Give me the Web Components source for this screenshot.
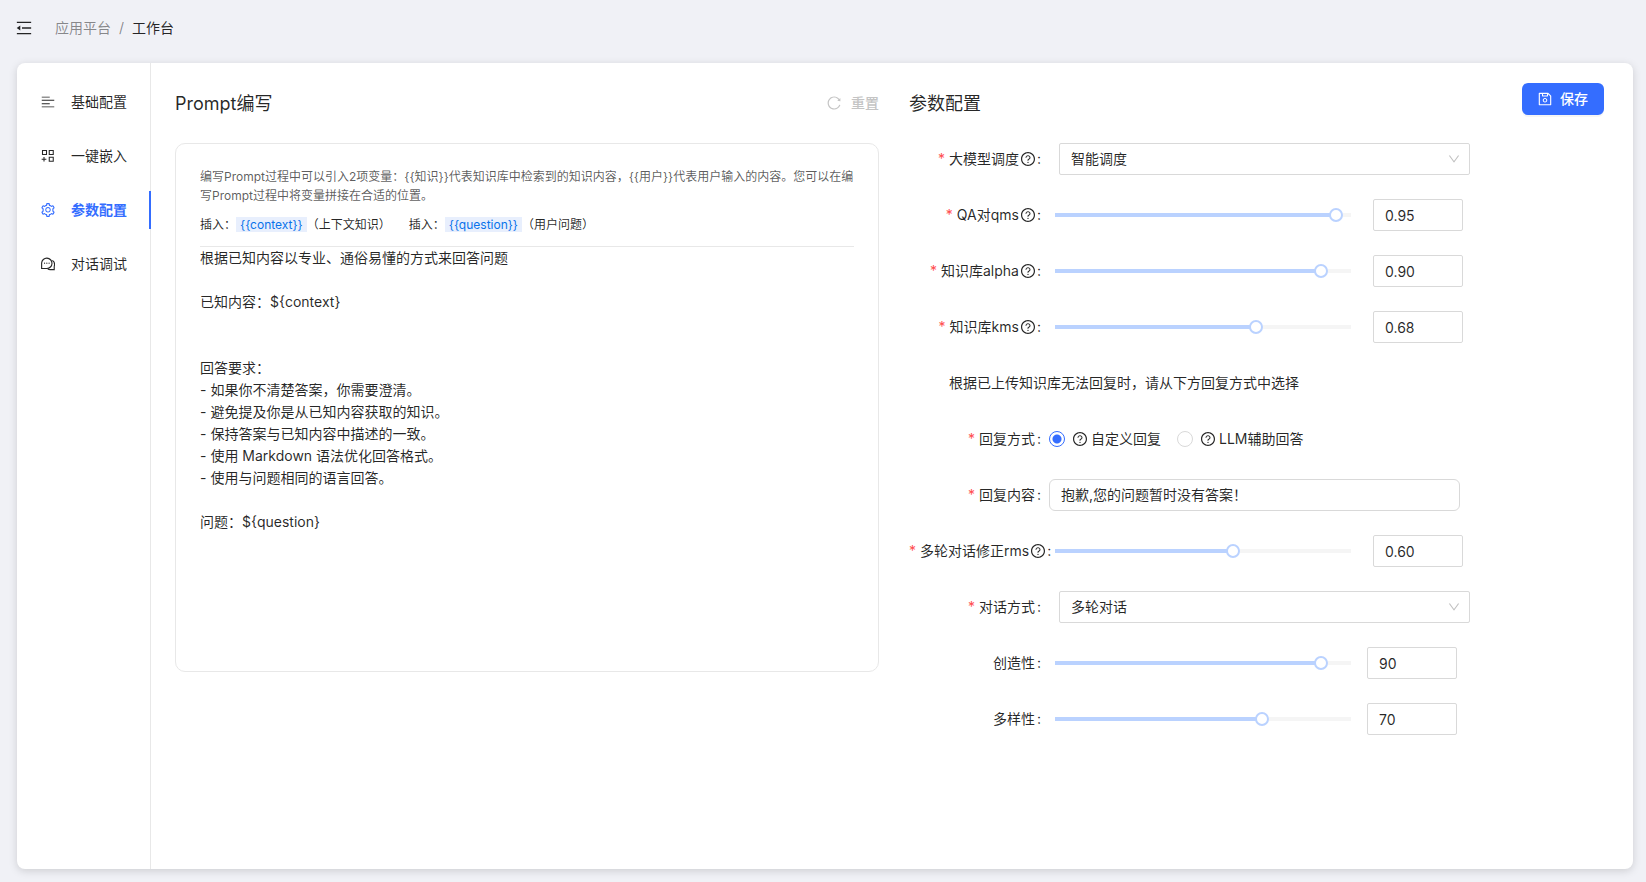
<!DOCTYPE html>
<html lang="zh-CN">
<head>
<meta charset="utf-8">
<meta name="viewport" content="width=device-width, initial-scale=1">
<title>工作台 - 应用平台</title>
<style>
  html {
    --primary: #346dff;
    --text: rgba(0, 0, 0, .85);
    --muted: rgba(0, 0, 0, .45);
    --line: #d9d9d9;
    --soft-line: #e8e8e8;
    --fill: #bad2ff;
    --rail: #f5f5f5;
    font: 14px/22px Inter, "Noto Sans CJK SC", sans-serif;
    color: var(--text);
    background: #f0f1f6;
  }
  body { margin: 0; }
</style>
</head>
<body>
<app-shell>
  <app-header slot="header"></app-header>
  <side-nav slot="nav">
    <nav-item icon="align">基础配置</nav-item>
    <nav-item icon="embed">一键嵌入</nav-item>
    <nav-item icon="setting" active>参数配置</nav-item>
    <nav-item icon="comment">对话调试</nav-item>
  </side-nav>
  <content-panel heading="Prompt编写">
    <reset-button slot="action">重置</reset-button>
    <prompt-editor></prompt-editor>
  </content-panel>
  <content-panel heading="参数配置">
    <save-button slot="action">保存</save-button>
    <select-row label="大模型调度" help required options="智能调度"></select-row>
    <slider-row label="QA对qms" help required value="0.95" max="1"></slider-row>
    <slider-row label="知识库alpha" help required value="0.90" max="1"></slider-row>
    <slider-row label="知识库kms" help required value="0.68" max="1"></slider-row>
    <note-row>根据已上传知识库无法回复时，请从下方回复方式中选择</note-row>
    <radio-row label="回复方式" required options="自定义回复|LLM辅助回答"></radio-row>
    <text-row label="回复内容" required value="抱歉,您的问题暂时没有答案！"></text-row>
    <slider-row label="多轮对话修正rms" help required value="0.60" max="1"></slider-row>
    <select-row label="对话方式" required options="多轮对话|单轮对话"></select-row>
    <slider-row label="创造性" value="90" max="100"></slider-row>
    <slider-row label="多样性" value="70" max="100"></slider-row>
  </content-panel>
</app-shell>

<script>
const ICONS = {
  fold: '<path d="M112 156h800v72H112zM400 476h512v72H400zM112 796h800v72H112zM104 512 304 366v292z"/>',
  align: '<path d="M112 174h512v56H112zM112 370h800v56H112zM112 598h512v56H112zM112 794h800v56H112z"/>',
  embed: '<path fill="none" stroke="currentColor" stroke-width="68" d="M160 160h256v256H160zM592 160h256v256H592zM592 592h256v256H592zM256 576v288M104 720h304"/>',
  setting: '<path d="M924.8 625.7l-65.5-56c3.1-19 4.7-38.4 4.7-57.8s-1.6-38.8-4.7-57.8l65.5-56a32.03 32.03 0 009.3-35.2l-.9-2.6a443.74 443.74 0 00-79.7-137.9l-1.8-2.1a32.12 32.12 0 00-35.1-9.5l-81.3 28.9c-30-24.6-63.5-44-99.7-57.6l-15.7-85a32.05 32.05 0 00-25.8-25.7l-2.7-.5c-52.1-9.4-106.9-9.4-159 0l-2.7.5a32.05 32.05 0 00-25.8 25.7l-15.8 85.4a351.86 351.86 0 00-99 57.4l-81.9-29.1a32 32 0 00-35.1 9.5l-1.8 2.1a446.02 446.02 0 00-79.7 137.9l-.9 2.6c-4.5 12.5-.8 26.5 9.3 35.2l66.3 56.6c-3.1 18.8-4.6 38-4.6 57.1 0 19.2 1.5 38.4 4.6 57.1L99 625.5a32.03 32.03 0 00-9.3 35.2l.9 2.6c18.1 50.4 44.9 96.9 79.7 137.9l1.8 2.1a32.12 32.12 0 0035.1 9.5l81.9-29.1c29.8 24.5 63.1 43.9 99 57.4l15.8 85.4a32.05 32.05 0 0025.8 25.7l2.7.5a449.4 449.4 0 00159 0l2.7-.5a32.05 32.05 0 0025.8-25.7l15.7-85a350 350 0 0099.7-57.6l81.3 28.9a32 32 0 0035.1-9.5l1.8-2.1c34.8-41.1 61.6-87.5 79.7-137.9l.9-2.6c4.5-12.3.8-26.3-9.3-35zM788.3 465.9c2.5 15.1 3.8 30.6 3.8 46.1s-1.3 31-3.8 46.1l-6.6 40.1 74.7 63.9a370.03 370.03 0 01-42.6 73.6L721 702.8l-31.4 25.8c-23.9 19.6-50.5 35-79.3 45.8l-38.1 14.3-17.9 97a377.5 377.5 0 01-85 0l-17.9-97.2-37.8-14.5c-28.5-10.8-55-26.2-78.7-45.7l-31.4-25.9-93.4 33.2c-17-22.9-31.2-47.6-42.6-73.6l75.5-64.5-6.5-40c-2.4-14.9-3.7-30.3-3.7-45.5 0-15.3 1.2-30.6 3.7-45.5l6.5-40-75.5-64.5c11.3-26.1 25.6-50.7 42.6-73.6l93.4 33.2 31.4-25.9c23.7-19.5 50.2-34.9 78.7-45.7l37.9-14.3 17.9-97.2c28.1-3.2 56.8-3.2 85 0l17.9 97 38.1 14.3c28.7 10.8 55.4 26.2 79.3 45.8l31.4 25.8 92.8-32.9c17 22.9 31.2 47.6 42.6 73.6L781.8 426l6.5 39.9zM512 326c-97.2 0-176 78.8-176 176s78.8 176 176 176 176-78.8 176-176-78.8-176-176-176zm79.2 255.2A111.6 111.6 0 01512 614c-29.9 0-58-11.7-79.2-32.8A111.6 111.6 0 01400 502c0-29.9 11.7-58 32.8-79.2C454 401.6 482.1 390 512 390c29.9 0 58 11.6 79.2 32.8A111.6 111.6 0 01624 502c0 29.9-11.7 58-32.8 79.2z"/>',
  comment: '<g fill="none" stroke="currentColor" stroke-width="72"><path d="M104 800V450a332 332 0 1 1 332 350z"/><path d="M790 280c130 80 160 250 120 380v210H650c-60 0-110-14-150-40"/></g><circle cx="290" cy="460" r="40"/><circle cx="436" cy="460" r="40"/><circle cx="582" cy="460" r="40"/>',
  reload: '<path d="M909.1 209.3l-56.4 44.1C775.8 155.1 656.2 92 521.9 92 290 92 102.3 279.5 102 511.5 101.7 743.7 289.8 932 521.9 932c181.3 0 335.8-115 394.6-276.1 1.5-4.2-.7-8.9-4.9-10.3l-56.7-19.5a8 8 0 00-10.1 4.8c-1.8 5-3.8 10-5.9 14.9-17.3 41-42.1 77.8-73.7 109.4A344.77 344.77 0 01655.9 829c-42.3 17.9-87.4 27-133.8 27-46.5 0-91.5-9.1-133.8-27A341.5 341.5 0 01279 755.2a342.16 342.16 0 01-73.7-109.4c-17.9-42.4-27-87.4-27-133.9s9.1-91.5 27-133.9c17.3-41 42.1-77.8 73.7-109.4 31.6-31.6 68.4-56.4 109.3-73.8 42.3-17.9 87.4-27 133.8-27 46.5 0 91.5 9.1 133.8 27a341.5 341.5 0 01109.3 73.8c9.9 9.9 19.2 20.4 27.8 31.4l-60.2 47a8 8 0 003 14.1l175.6 43c5 1.2 9.9-2.6 9.9-7.7l.8-180.9c-.1-6.6-7.8-10.3-13-6.2z"/>',
  save: '<path d="M893.3 293.3L730.7 130.7c-7.5-7.5-16.7-13-26.7-16V112H144c-17.7 0-32 14.3-32 32v736c0 17.7 14.3 32 32 32h736c17.7 0 32-14.3 32-32V338.5c0-17-6.7-33.2-18.7-45.2zM384 184h256v104H384V184zm456 656H184V184h136v136c0 17.7 14.3 32 32 32h320c17.7 0 32-14.3 32-32V205.8l136 136V840zM512 442c-79.5 0-144 64.5-144 144s64.5 144 144 144 144-64.5 144-144-64.5-144-144-144zm0 224c-44.2 0-80-35.8-80-80s35.8-80 80-80 80 35.8 80 80-35.8 80-80 80z"/>',
  down: '<path d="M884 256h-75c-5.1 0-9.9 2.5-12.9 6.6L512 654.2 227.9 262.6c-3-4.1-7.8-6.6-12.9-6.6h-75c-6.5 0-10.3 7.4-6.5 12.7l352.6 486.1c12.8 17.6 39 17.6 51.7 0l352.6-486.1c3.9-5.3.1-12.7-6.4-12.7z"/>',
  question: '<path d="M512 64C264.6 64 64 264.6 64 512s200.6 448 448 448 448-200.6 448-448S759.4 64 512 64zm0 820c-205.4 0-372-166.6-372-372s166.6-372 372-372 372 166.6 372 372-166.6 372-372 372z"/><path d="M623.6 316.7C593.6 290.4 554 276 512 276s-81.6 14.5-111.6 40.7C369.2 344 352 380.7 352 420v7.6c0 4.4 3.6 8 8 8h48c4.4 0 8-3.6 8-8V420c0-44.1 43.1-80 96-80s96 35.9 96 80c0 31.1-22 59.6-56.1 72.7-21.2 8.1-39.2 22.3-52.1 40.9-13.1 19-19.9 41.8-19.9 64.9V620c0 4.4 3.6 8 8 8h48c4.4 0 8-3.6 8-8v-22.7a48.3 48.3 0 0130.9-44.8c59-22.7 97.1-74.7 97.1-132.5.1-39.3-17.1-76-48.3-103.3zM472 732a40 40 0 1080 0 40 40 0 10-80 0z"/>'
};

/* Base class: renders this.view() into an open shadow root. */
class View extends HTMLElement {
  connectedCallback() {
    if (this.shadowRoot) return;
    const template = document.createElement('template');
    template.innerHTML = this.view();
    this.attachShadow({ mode: 'open' }).append(template.content.cloneNode(true));
    this.ready();
  }
  ready() {}
  attr(name) { return this.getAttribute(name) || ''; }
}

customElements.define('app-icon', class extends View {
  view() {
    return `<style>
      :host { display: inline-block; width: 14px; height: 14px; flex: none; }
      svg { display: block; width: 100%; height: 100%; fill: currentColor; }
    </style>
    <svg viewBox="64 64 896 896" aria-hidden="true">${ICONS[this.attr('name')]}</svg>`;
  }
});

customElements.define('app-shell', class extends View {
  view() {
    return `<style>
      :host { display: flex; flex-direction: column; min-height: 100vh; box-sizing: border-box; padding: 0 13px 13px 17px; }
      .card { flex: 1; display: flex; background: #fff; border-radius: 8px; box-shadow: 0 2px 8px rgba(0, 0, 0, .15); }
      main { flex: 1; min-width: 0; display: grid; grid-template-columns: minmax(0, 704fr) minmax(0, 695fr); gap: 30px; padding: 20px 29px 24px 24px; }
    </style>
    <slot name="header"></slot>
    <div class="card"><slot name="nav"></slot><main><slot></slot></main></div>`;
  }
});

customElements.define('app-header', class extends View {
  view() {
    return `<style>
      :host { display: flex; align-items: center; height: 56px; margin-bottom: 7px; }
      button { display: flex; padding: 0; border: 0; background: none; color: inherit; margin-right: 24px; }
      app-icon { width: 16px; height: 16px; margin: 0 -1px; }
      ol { display: flex; gap: 8px; margin: 0; padding: 0; list-style: none; }
      a { color: var(--muted); text-decoration: none; }
      .sep { color: var(--muted); }
    </style>
    <button type="button" aria-label="收起菜单"><app-icon name="fold"></app-icon></button>
    <nav><ol><li><a href="#">应用平台</a></li><li class="sep">/</li><li>工作台</li></ol></nav>`;
  }
});

customElements.define('side-nav', class extends View {
  view() {
    return `<style>
      :host { display: block; width: 133px; padding-top: 20px; border-right: 1px solid var(--soft-line); }
      nav { display: flex; flex-direction: column; gap: 16px; margin-right: -1px; }
    </style><nav><slot></slot></nav>`;
  }
});

customElements.define('nav-item', class extends View {
  view() {
    return `<style>
      :host { display: block; }
      a { display: flex; align-items: center; gap: 16px; height: 38px; padding-left: 24px; color: var(--text); text-decoration: none; border-right: 2px solid transparent; }
      :host([active]) a { color: var(--primary); font-weight: 700; border-color: var(--primary); }
    </style><a href="#"><app-icon name="${this.attr('icon')}"></app-icon><slot></slot></a>`;
  }
});

customElements.define('content-panel', class extends View {
  view() {
    return `<style>
      :host { display: block; min-width: 0; }
      header { display: flex; justify-content: space-between; align-items: flex-start; margin-bottom: 18px; }
      h2 { margin: 0; font-size: 18px; line-height: 42px; font-weight: 400; }
    </style>
    <header><h2>${this.attr('heading')}</h2><slot name="action"></slot></header>
    <slot></slot>`;
  }
});

customElements.define('reset-button', class extends View {
  view() {
    return `<style>
      :host { display: block; }
      button { display: flex; align-items: center; gap: 10px; height: 40px; padding: 0; border: 0; background: none; font: inherit; font-weight: 500; color: #c4c4c4; }
    </style><button type="button"><app-icon name="reload"></app-icon><slot></slot></button>`;
  }
});

customElements.define('save-button', class extends View {
  view() {
    return `<style>
      :host { display: block; }
      button { display: flex; align-items: center; gap: 8px; height: 32px; padding: 0 16px; border: 0; border-radius: 6px; background: var(--primary); color: #fff; font: inherit; font-weight: 500; box-shadow: 0 2px 0 rgba(0, 0, 0, .04); }
    </style><button type="button"><app-icon name="save"></app-icon><slot></slot></button>`;
  }
});

customElements.define('prompt-editor', class extends View {
  view() {
    return `<style>
      :host { display: block; border: 1px solid var(--soft-line); border-radius: 10px; padding: 23px 24px 28px; }
      p { margin: 0 0 8px; font-size: 12px; line-height: 19px; color: rgba(0, 0, 0, .65); }
      .insert { display: flex; gap: 18px; padding-bottom: 9px; border-bottom: 1px solid var(--soft-line); font-size: 12px; line-height: 24px; }
      button { padding: 0 4px; border: 0; background: #e8effd; color: #0a73eb; font: inherit; line-height: 15px; }
      textarea { display: block; width: 100%; box-sizing: border-box; margin: 0; padding: 0; border: 0; outline: 0; resize: none; background: none; color: inherit; font: inherit; }
    </style>
    <p id="hint">编写Prompt过程中可以引入2项变量：{{知识}}代表知识库中检索到的知识内容，{{用户}}代表用户输入的内容。您可以在编写Prompt过程中将变量拼接在合适的位置。</p>
    <div class="insert">
      <span>插入：<button type="button">{{context}}</button>（上下文知识）</span>
      <span>插入：<button type="button">{{question}}</button>（用户问题）</span>
    </div>
    <textarea rows="18" aria-label="Prompt" aria-describedby="hint" spellcheck="false">根据已知内容以专业、通俗易懂的方式来回答问题

已知内容：\${context}


回答要求：
- 如果你不清楚答案，你需要澄清。
- 避免提及你是从已知内容获取的知识。
- 保持答案与已知内容中描述的一致。
- 使用 Markdown 语法优化回答格式。
- 使用与问题相同的语言回答。

问题：\${question}</textarea>`;
  }
});

/* A form line: label column, then whatever control() gives. */
class FormRow extends View {
  caption() {
    const help = this.hasAttribute('help') ? '<app-icon name="question"></app-icon>' : '';
    return `${this.hasAttribute('required') ? '<span class="star">*</span>' : ''}${this.attr('label')}${help}<span class="colon">:</span>`;
  }
  view() {
    return `<style>
      :host { display: grid; grid-template-columns: 140px minmax(0, 411px); align-items: center; height: 32px; margin-bottom: 24px; }
      .label { text-align: right; white-space: nowrap; }
      .label app-icon { margin-left: 2px; vertical-align: -2px; }
      .star { margin-right: 4px; color: #ff4d4f; }
      .colon { margin: 0 8px 0 2px; }
      input, select { font: inherit; color: inherit; }
      .box { box-sizing: border-box; height: 32px; padding: 0 11px; border: 1px solid var(--line); border-radius: 2px; background: #fff; outline: 0; }
      ${this.css()}
    </style>${this.head()}${this.control()}`;
  }
  head() { return `<label class="label" for="field">${this.caption()}</label>`; }
  css() { return ''; }
}

customElements.define('select-row', class extends FormRow {
  css() {
    return `.wrap { display: grid; margin: 0 -10px 0 10px; align-items: center; }
      .wrap > * { grid-area: 1 / 1; }
      select { width: 100%; appearance: none; }
      .wrap app-icon { width: 12px; height: 12px; justify-self: end; margin-right: 10px; color: rgba(0, 0, 0, .25); pointer-events: none; }`;
  }
  control() {
    const options = this.attr('options').split('|').map(o => `<option>${o}</option>`).join('');
    return `<div class="wrap"><select class="box" id="field">${options}</select><app-icon name="down"></app-icon></div>`;
  }
});

customElements.define('slider-row', class extends FormRow {
  css() {
    return `.wrap { display: flex; align-items: center; margin-right: -10px; }
      .slide { flex: 0 1 310px; min-width: 0; height: 14px; margin: 0 9px 0 -1px; appearance: none;
        background: linear-gradient(var(--fill), var(--fill)) 7px 5px / calc((100% - 14px) * var(--at)) 4px no-repeat,
          linear-gradient(var(--rail), var(--rail)) 7px 5px / calc(100% - 14px) 4px no-repeat; }
      .slide::-webkit-slider-thumb { appearance: none; box-sizing: border-box; width: 14px; height: 14px; border: 2px solid var(--fill); border-radius: 50%; background: #fff; }
      .num { flex: none; width: 90px; }
      :host([max="1"]) .num { margin-left: 6px; }`;
  }
  control() {
    const max = this.attr('max');
    const value = this.attr('value');
    return `<div class="wrap" style="--at: ${value / max}">
      <input class="slide" id="field" type="range" min="0" max="${max}" step="${max / 100}" value="${value}">
      <input class="box num" type="text" inputmode="decimal" aria-label="${this.attr('label')}" value="${value}">
    </div>`;
  }
  ready() {
    const [slide, num] = this.shadowRoot.querySelectorAll('input');
    const max = Number(this.attr('max'));
    const paint = () => slide.parentNode.style.setProperty('--at', slide.value / max);
    slide.addEventListener('input', () => { num.value = Number(slide.value).toFixed(max === 1 ? 2 : 0); paint(); });
    num.addEventListener('change', () => { slide.value = num.value; paint(); });
  }
});

customElements.define('text-row', class extends FormRow {
  css() { return '.box { border-radius: 6px; width: 100%; padding-bottom: 2px; }'; }
  control() { return `<input class="box" id="field" type="text" value="${this.attr('value')}">`; }
});

customElements.define('radio-row', class extends FormRow {
  head() { return `<span class="label" id="group">${this.caption()}</span>`; }
  css() {
    return `.wrap, .wrap label { display: flex; align-items: center; white-space: nowrap; }
      .wrap { gap: 16px; }
      .wrap app-icon { margin: 0 4px 0 8px; }
      input { appearance: none; flex: none; width: 16px; height: 16px; margin: 0; border: 1px solid var(--line); border-radius: 50%; background: #fff; }
      input:checked { border-color: var(--primary); background: radial-gradient(circle, var(--primary) 4px, #fff 5px); }`;
  }
  control() {
    const items = this.attr('options').split('|').map((o, i) =>
      `<label><input type="radio" name="reply"${i ? '' : ' checked'}><app-icon name="question"></app-icon>${o}</label>`).join('');
    return `<div class="wrap" role="radiogroup" aria-labelledby="group">${items}</div>`;
  }
});

customElements.define('note-row', class extends View {
  view() {
    return `<style>
      :host { display: block; margin-bottom: 24px; padding-left: 40px; line-height: 32px; }
    </style><slot></slot>`;
  }
});
</script>
</body>
</html>
